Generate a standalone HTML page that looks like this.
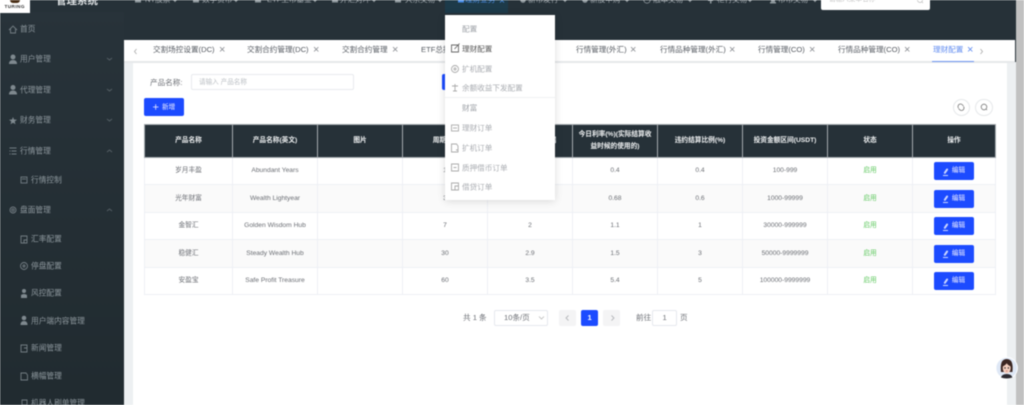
<!DOCTYPE html>
<html lang="zh"><head><meta charset="utf-8"><title>管理系统</title>
<style>
html,body{margin:0;padding:0;background:#fff}
#r{position:relative;width:1024px;height:405px;overflow:hidden;background:#fff;font-family:"Liberation Sans","Noto Sans CJK SC",sans-serif;filter:blur(.45px)}
#r div,#r svg{position:absolute}
.t{white-space:nowrap;line-height:12px}
.s{color:#8f999f;font-size:7.7px;transform:translateY(-5.300px)}
.n{color:#a5adb2;font-size:7.6px;top:-6.500px}
.tab{color:#555a61;font-size:7.6px;top:44px}
.x{color:#8a8d92;font-size:11px;top:43.500px}
.d{font-size:7.6px;color:#9a9ea4;transform:translateY(-5.300px)}
.p{font-size:7.6px;color:#6b6e74;top:311.500px}
table{position:absolute;left:144px;top:123.500px;width:851px;height:171.500px;border-collapse:collapse;table-layout:fixed;font-size:6.700px;color:#6b6e74;text-align:center}
th{background:#263138;color:#f0f2f3;font-weight:700;border:1px solid #a5abaf;height:31px;padding:1px 5px 0;line-height:12.500px}
td{border:1px solid #eef0f5;height:25.500px;padding:1px 0 0;line-height:10px}
tr:nth-child(even) td{background:#fafafa}
.g{color:#62c962}
.b{display:inline-block;position:relative;width:40px;height:18px;background:#1c4bff;border-radius:2px;color:#eef;line-height:18px;font-size:6.600px;vertical-align:middle;text-indent:9px}
.b:before{content:"";position:absolute;left:11px;top:5.500px;width:1.500px;height:6px;background:#c9d4ff;transform:rotate(35deg);border-radius:1px}
.b:after{content:"";position:absolute;left:9px;top:12.500px;width:5px;height:.8px;background:#c9d4ff}
</style></head><body><div id="r">
<!-- backgrounds -->
<div style="left:0;top:0;width:1016px;height:405px;background:#263138"></div>
<div style="left:0;top:12px;width:124px;height:393px;background:linear-gradient(#28333a,#212b30)"></div>
<div style="left:124px;top:62px;width:892px;height:343px;background:#edf0f2"></div>
<div style="left:133px;top:63px;width:874px;height:342px;background:#fff"></div>
<div style="left:1016px;top:0;width:8px;height:405px;background:#c1c1c1"></div>
<!-- logo -->
<div style="left:0;top:0;width:29.500px;height:12.700px;background:#fff"></div>
<div style="left:10px;top:0;width:10px;height:3px;background:#4a2f16;border-radius:0 0 5px 5px"></div>
<div class="t" style="left:4.500px;top:.500px;font-size:4.700px;font-weight:700;color:#333;letter-spacing:.4px">TURING</div>
<div class="t" style="left:56px;top:-5px;font-size:10.500px;font-weight:700;color:#dfe3e5">管理系统</div>
<!-- nav -->
<div style="left:445px;top:0;width:63px;height:12.700px;background:#1d3a49"></div>
<svg style="left:124px;top:0" width="700" height="6" fill="#8f989d" stroke="none">
<g><rect x="11" y="0" width="6" height="2.500"/><rect x="69" y="0" width="6" height="2.500"/><rect x="131" y="0" width="6" height="2.500"/><rect x="208" y="0" width="6" height="2.500"/><rect x="271" y="0" width="6" height="2.500"/></g>
<rect x="334" y="0" width="6" height="2.500" fill="#4c8fe8"/>
<circle cx="399" cy="0" r="2.800"/><circle cx="461" cy="0" r="2.800"/>
<circle cx="523" cy="0" r="3.200" fill="none" stroke="#8f989d" stroke-width=".8"/>
<path d="M586 0h1.500v3.500H586zM584 0h5v1h-5z"/><path d="M646 3.500h6v-1.500h-6zM647 0h4v2h-4z"/>
<path d="M49 0h4l-2 2.200zM110 0h4l-2 2.200zM189 0h4l-2 2.200zM248 0h4l-2 2.200zM314 0h4l-2 2.200zM439 0h4l-2 2.200zM501 0h4l-2 2.200zM564 0h4l-2 2.200zM624 0h4l-2 2.200zM689 0h4l-2 2.200z"/>
<path d="M376 2.500l2-2 2 2" fill="none" stroke="#4c8fe8" stroke-width=".8"/>
</svg>
<div class="t n" style="left:145px">NT股票</div>
<div class="t n" style="left:202px">数字货币</div>
<div class="t n" style="left:267px">ETF上市基金</div>
<div class="t n" style="left:340px">外汇对冲</div>
<div class="t n" style="left:405px">大宗交易</div>
<div class="t n" style="left:465px;color:#4c8fe8">理财业务</div>
<div class="t n" style="left:528px">新币发行</div>
<div class="t n" style="left:590px">新股申购</div>
<div class="t n" style="left:653px">融本交易</div>
<div class="t n" style="left:717px">柜行交易</div>
<div class="t n" style="left:778px">币币交易</div>
<div style="left:821px;top:-3px;width:109px;height:12.500px;background:#fff;border-radius:2px"></div>
<div class="t" style="left:829px;top:-6px;font-size:6.600px;color:#bbb">请输入菜单名称</div>
<svg style="left:916px;top:0" width="9" height="4" fill="none" stroke="#bbb" stroke-width=".7"><circle cx="4" cy="0" r="2.500"/><path d="M6 2l1 1"/></svg>
<!-- sidebar -->
<svg style="left:0;top:0" width="124" height="405" fill="none" stroke="#737d83" stroke-width=".9">
<path d="M9 30l4-4 4 4M10.500 29v4h5v-4"/>
<g fill="#7f898f" stroke="none"><circle cx="13" cy="57" r="2.500"/><path d="M9 64q0-4 4-4t4 4z"/><circle cx="13" cy="87.500" r="2.500"/><path d="M9 94.500q0-4 4-4t4 4z"/><path d="M13 117l1 2.500 3 .2-2.300 1.800.8 2.800-2.500-1.600-2.500 1.600.8-2.800-2.300-1.800 3-.2z"/></g>
<path d="M9.500 148h7M11.500 151h5M11.500 154h5M9.500 151h1M9.500 154h1"/>
<circle cx="13" cy="210" r="3"/><circle cx="13" cy="210" r="1.200"/>
<rect x="21" y="177" width="6" height="6"/><path d="M22 179h4"/>
<path d="M21 236h6v7h-6zM24 240h3v3h-3z"/>
<circle cx="24" cy="266" r="3.500"/><circle cx="24" cy="266" r="1"/>
<g fill="#7f898f" stroke="none"><circle cx="24" cy="291" r="2"/><path d="M21 298v-3q3-2 6 0v3z"/><circle cx="24" cy="318" r="2.300"/><path d="M20.500 325q0-4 3.500-4t3.500 4z"/></g>
<path d="M21 345h6v7h-6zM24 348h3M21 373h5l1.500 2v5h-6.500zM22 400h5v5h-5z"/>
<path d="M107 58l2.500 2 2.500-2M107 89l2.500 2 2.500-2M107 119l2.500 2 2.500-2M107 152l2.500-2 2.500 2M107 211l2.500-2 2.500 2" stroke="#566066"/>
</svg>
<div class="t s" style="left:20px;top:29px">首页</div>
<div class="t s" style="left:20px;top:59px">用户管理</div>
<div class="t s" style="left:20px;top:90px">代理管理</div>
<div class="t s" style="left:20px;top:120px">财务管理</div>
<div class="t s" style="left:20px;top:151px">行情管理</div>
<div class="t s" style="left:31px;top:180px">行情控制</div>
<div class="t s" style="left:20px;top:210px">盘面管理</div>
<div class="t s" style="left:31px;top:239px">汇率配置</div>
<div class="t s" style="left:31px;top:266px">停盘配置</div>
<div class="t s" style="left:31px;top:293px">风控配置</div>
<div class="t s" style="left:31px;top:321px">用户端内容管理</div>
<div class="t s" style="left:31px;top:348px">新闻管理</div>
<div class="t s" style="left:31px;top:376px">横幅管理</div>
<div class="t s" style="left:31px;top:403px">机器人刷单管理</div>
<!-- tabs -->
<div style="left:124px;top:40px;width:891px;height:21px;background:#fff"></div>
<div style="left:124px;top:61px;width:891px;height:1.500px;background:#e6e8ea"></div>
<div style="left:932px;top:60.500px;width:42px;height:1.500px;background:#6d94f0"></div>
<svg style="left:132px;top:47px" width="854" height="8" fill="none" stroke="#aaa" stroke-width=".8"><path d="M4.500 2L2.500 4.500 4.500 7M848.500 2l2 2.500-2 2.500"/></svg>
<div class="t tab" style="left:153px">交割场控设置(DC)</div><div class="t x" style="left:219px">×</div>
<div class="t tab" style="left:247px">交割合约管理(DC)</div><div class="t x" style="left:313px">×</div>
<div class="t tab" style="left:342px">交割合约管理</div><div class="t x" style="left:392px">×</div>
<div class="t tab" style="left:421px">ETF总控</div>
<div class="t tab" style="left:576px">行情管理(外汇)</div><div class="t x" style="left:630px">×</div>
<div class="t tab" style="left:660px">行情品种管理(外汇)</div><div class="t x" style="left:729px">×</div>
<div class="t tab" style="left:758px">行情管理(CO)</div><div class="t x" style="left:809px">×</div>
<div class="t tab" style="left:838px">行情品种管理(CO)</div><div class="t x" style="left:904px">×</div>
<div class="t tab" style="left:933px;color:#5f8bf0">理财配置</div><div class="t x" style="left:967px;color:#5f8bf0">×</div>
<!-- search -->
<div class="t" style="left:150px;top:76.500px;font-size:7.600px;color:#6b6e74">产品名称:</div>
<div style="left:190.500px;top:74px;width:163px;height:15.500px;border:1px solid #e8eaee;border-radius:2px;box-sizing:border-box"></div>
<div class="t" style="left:199px;top:76.500px;font-size:6.600px;color:#bcc0c5">请输入 产品名称</div>
<div style="left:442px;top:74px;width:12px;height:16px;background:#1c4bff;border-radius:2px"></div>
<div style="left:144px;top:98px;width:40px;height:18px;background:#1c4bff;border-radius:2px"></div>
<svg style="left:152px;top:103px" width="8" height="8" stroke="#eef" stroke-width=".8"><path d="M1 4h5.500M3.700 1.200v5.500"/></svg>
<div class="t" style="left:162px;top:101.500px;font-size:6.600px;color:#eef">新增</div>
<div style="left:952.500px;top:98.500px;width:17.500px;height:17.500px;border:1px solid #e6e8ea;border-radius:50%;box-sizing:border-box"></div>
<div style="left:975px;top:98.500px;width:17.500px;height:17.500px;border:1px solid #e6e8ea;border-radius:50%;box-sizing:border-box"></div>
<svg style="left:952px;top:98px" width="42" height="18" fill="none" stroke="#777" stroke-width=".8"><path d="M6.500 10a2.500 2.500 0 0 1 4-3l1 1M11.500 8.500a2.500 2.500 0 0 1-4 3l-1-1"/><circle cx="32" cy="9" r="2.800"/><path d="M34 11l1 1"/></svg>
<!-- table -->
<table><colgroup><col style="width:88px"><col style="width:85px"><col style="width:85px"><col style="width:85px"><col style="width:85px"><col style="width:85px"><col style="width:85px"><col style="width:85px"><col style="width:85px"><col style="width:83px"></colgroup>
<thead><tr><th>产品名称</th><th>产品名称(英文)</th><th>图片</th><th>周期(天)</th><th>日利率(%)/APP端</th><th>今日利率(%)(实际结算收益时候的使用的)</th><th>违约结算比例(%)</th><th>投资金额区间(USDT)</th><th>状态</th><th>操作</th></tr></thead>
<tbody>
<tr><td>岁月丰盈</td><td>Abundant Years</td><td></td><td>1</td><td>0.5</td><td>0.4</td><td>0.4</td><td>100-999</td><td class="g">启用</td><td><span class="b">编辑</span></td></tr>
<tr><td>光年财富</td><td>Wealth Lightyear</td><td></td><td>3</td><td>1.5</td><td>0.68</td><td>0.6</td><td>1000-99999</td><td class="g">启用</td><td><span class="b">编辑</span></td></tr>
<tr><td>金智汇</td><td>Golden Wisdom Hub</td><td></td><td>7</td><td>2</td><td>1.1</td><td>1</td><td>30000-999999</td><td class="g">启用</td><td><span class="b">编辑</span></td></tr>
<tr><td>稳健汇</td><td>Steady Wealth Hub</td><td></td><td>30</td><td>2.9</td><td>1.5</td><td>3</td><td>50000-9999999</td><td class="g">启用</td><td><span class="b">编辑</span></td></tr>
<tr><td>安盈宝</td><td>Safe Profit Treasure</td><td></td><td>60</td><td>3.5</td><td>5.4</td><td>5</td><td>100000-9999999</td><td class="g">启用</td><td><span class="b">编辑</span></td></tr>
</tbody></table>
<!-- dropdown -->
<div style="left:445px;top:15px;width:110px;height:185px;background:#fff;box-shadow:0 1px 8px rgba(0,0,0,.14)"></div>
<div style="left:445px;top:97px;width:110px;height:1px;background:#f0f1f3"></div>
<svg style="left:445px;top:15px" width="20" height="185" fill="none" stroke="#aaa" stroke-width=".9">
<path d="M6.500 30h7v7h-7zM9.500 34l5-5.500" stroke="#666"/>
<circle cx="10" cy="54" r="3.500"/><circle cx="10" cy="54" r="1"/>
<path d="M7 71h6M10 69v7M8 76h4"/>
<rect x="6.500" y="110" width="7" height="6"/><path d="M8 113h4"/>
<path d="M6.500 129h5l1.500 2v6h-6.500zM11 135h2"/>
<path d="M6.500 149h7v7h-7zM8.500 152.500h3"/>
<path d="M6.500 168h7v7h-7zM10 171h3.500v4H10z"/>
</svg>
<div class="t d" style="left:462px;top:29px">配置</div>
<div class="t d" style="left:462px;top:49px;color:#555">理财配置</div>
<div class="t d" style="left:462px;top:69px;color:#a9acb1">扩机配置</div>
<div class="t d" style="left:462px;top:88px;color:#a9acb1">余额收益下发配置</div>
<div class="t d" style="left:462px;top:108px">财富</div>
<div class="t d" style="left:462px;top:128px;color:#a9acb1">理财订单</div>
<div class="t d" style="left:462px;top:148px;color:#a9acb1">扩机订单</div>
<div class="t d" style="left:462px;top:168px;color:#a9acb1">质押借币订单</div>
<div class="t d" style="left:462px;top:187px;color:#a9acb1">借贷订单</div>
<!-- pagination -->
<div class="t p" style="left:463px">共 1 条</div>
<div style="left:494px;top:310px;width:54px;height:15.500px;border:1px solid #e6e8ee;border-radius:2px;box-sizing:border-box"></div>
<div class="t p" style="left:504px">10条/页</div>
<svg style="left:538px;top:315px" width="8" height="6" fill="none" stroke="#bbb" stroke-width=".8"><path d="M1 1.500l2.500 2.500 2.500-2.500"/></svg>
<div style="left:559px;top:310px;width:17px;height:15.500px;background:#f4f4f5;border-radius:2px"></div>
<div style="left:581px;top:310px;width:17px;height:15.500px;background:#1c4bff;border-radius:2px"></div>
<div style="left:603px;top:310px;width:17px;height:15.500px;background:#f4f4f5;border-radius:2px"></div>
<div class="t p" style="left:587.500px;font-weight:700;color:#fff">1</div>
<svg style="left:559px;top:310px" width="62" height="16" fill="none" stroke="#b5b7bb" stroke-width=".9"><path d="M9.500 5.500L7 8l2.500 2.500M52.500 5.500L55 8l-2.500 2.500"/></svg>
<div class="t p" style="left:636px">前往</div>
<div style="left:652px;top:310px;width:25px;height:15.500px;border:1px solid #e6e8ee;border-radius:2px;box-sizing:border-box"></div>
<div class="t p" style="left:662.500px">1</div>
<div class="t p" style="left:680px">页</div>
<!-- avatar -->
<svg style="left:995px;top:356px" width="24" height="24">
<circle cx="11.700" cy="12" r="11.200" fill="#fff"/><circle cx="11.700" cy="12" r="10.300" fill="#dfe8f6"/>
<path d="M6 16Q4.500 3 11.700 3t5.700 13z" fill="#3a2622"/>
<ellipse cx="11.700" cy="12" rx="4" ry="5.500" fill="#f2cdbd"/>
<path d="M7.500 10.500q.8-4.500 4.200-5 3 .5 4.200 5-2.800-1-4.200-3.200-1.400 2.200-4.200 3.200z" fill="#3a2622"/>
<path d="M6 21.500q1-3.500 5.700-3.500t5.700 3.500q-5.700 2-11.400 0z" fill="#2c2a30"/>
<circle cx="10" cy="12" r=".7" fill="#222"/><circle cx="13.400" cy="12" r=".7" fill="#222"/>
<path d="M10.800 15h1.800" stroke="#c0605a" stroke-width=".7"/>
</svg>
</div></body></html>
